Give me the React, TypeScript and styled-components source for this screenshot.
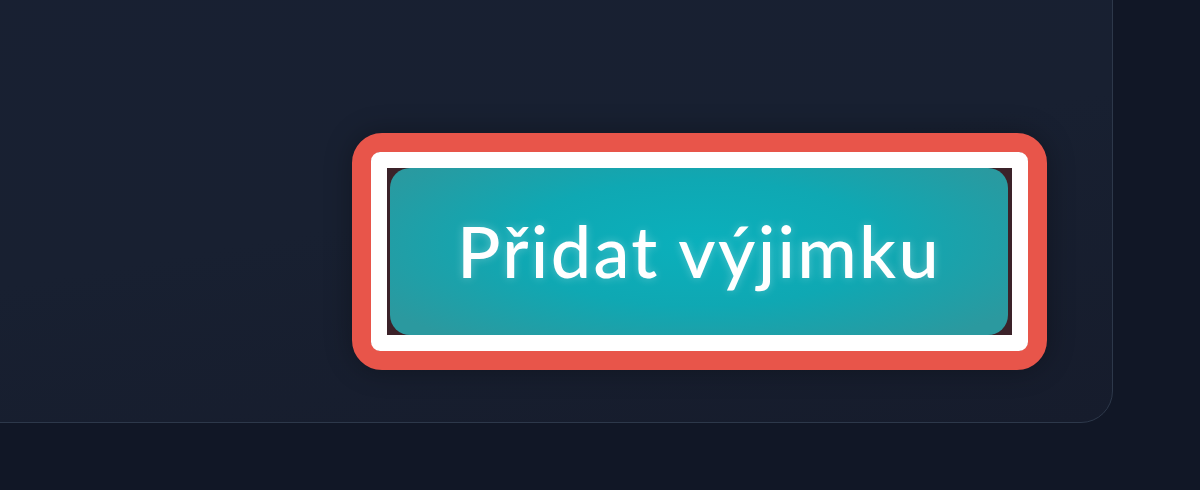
import React from "react";
import styled, { createGlobalStyle } from "styled-components";

const Global = createGlobalStyle`
  html, body { margin: 0; padding: 0; background: #111726; }
  body { width: 1200px; height: 490px; overflow: hidden; font-family: "Lato", "Inter", sans-serif; }
  #root { width: 1200px; height: 490px; }
`;

const Page = styled.div`
  width: 1200px;
  height: 490px;
  box-sizing: border-box;
  background: #111726;
  display: flex;
  padding: 0 87px 67px 0;
`;

const Card = styled.section`
  flex: 1;
  margin: -40px 0 0 -40px;
  background: linear-gradient(170deg, #182032 0%, #182031 50%, #161c2c 100%);
  border: 1px solid #2d384a;
  border-radius: 32px;
  display: flex;
  justify-content: flex-end;
  align-items: flex-end;
  padding: 0 65px 52px 0;
`;

const RedRing = styled.div`
  border: 19px solid #e8554a;
  border-radius: 30px;
  box-shadow: 0 0 28px rgba(0, 0, 0, 0.3);
  display: flex;
`;

const WhiteRing = styled.div`
  border: 16px solid #ffffff;
  border-radius: 9px;
  background: #3b2229;
  display: flex;
  padding: 0 4px 0 3px;
`;

const Button = styled.button`
  width: 618px;
  height: 167px;
  border: none;
  border-radius: 20px;
  background: radial-gradient(ellipse 60% 75% at 50% 45%, #0ab0bc 0%, #0fa8b3 50%, #2b999f 100%);
  color: #ffffff;
  font-family: "Lato", "Inter", sans-serif;
  font-weight: 500;
  font-size: 72px;
  letter-spacing: 2.3px;
  text-shadow: 0 0 10px rgba(255, 255, 255, 0.3);
  display: flex;
  align-items: center;
  justify-content: center;
  padding: 0 0 4px 0;
  cursor: pointer;
`;

export default function App() {
  return (
    <>
      <Global />
      <Page>
        <Card>
          <RedRing>
            <WhiteRing>
              <Button>Přidat výjimku</Button>
            </WhiteRing>
          </RedRing>
        </Card>
      </Page>
    </>
  );
}
